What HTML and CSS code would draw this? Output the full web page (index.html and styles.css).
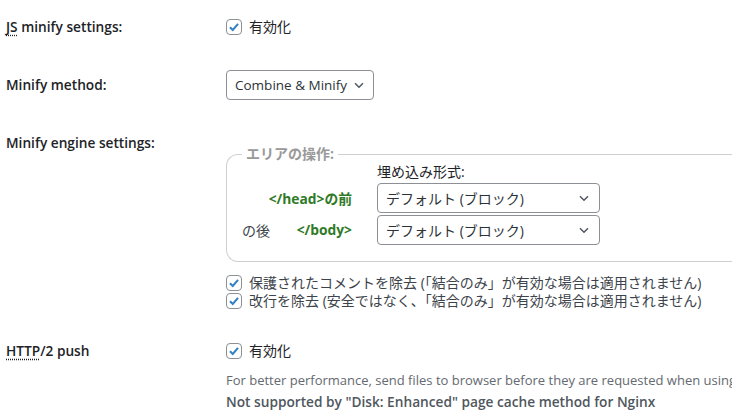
FILE: index.html
```html
<!DOCTYPE html>
<html lang="ja">
<head>
  <meta charset="UTF-8">
  <title>Minify</title>
  <link rel="stylesheet" href="styles.css">
</head>
<body>
  <div class="settings">
    <div class="row row-js">
      <div class="label"><abbr>JS</abbr> minify settings:</div>
      <div class="value">
        <label class="check">
          <span class="box"><svg viewBox="0 0 16 16" width="16" height="16"><path d="M3.4 8.2 L6.6 11.4 L12.6 4.4" fill="none" stroke="#3582c4" stroke-width="2.4"/></svg></span>
          有効化
        </label>
      </div>
    </div>

    <div class="row row-method">
      <div class="label">Minify method:</div>
      <div class="value">
        <div class="select select-method">
          <span>Combine &amp; Minify</span>
          <svg viewBox="0 0 12 12" width="12" height="12"><path d="M2 4.2 L6 8.2 L10 4.2" fill="none" stroke="#50575e" stroke-width="1.5"/></svg>
        </div>
      </div>
    </div>

    <div class="row row-engine">
      <div class="label">Minify engine settings:</div>
      <div class="value">
        <fieldset class="area">
          <legend>エリアの操作:</legend>
          <div class="area-grid">
            <div></div>
            <div class="area-head">埋め込み形式:</div>

            <div class="area-label right"><code>&lt;/head&gt;の前</code></div>
            <div class="select select-embed">
              <span>デフォルト (ブロック)</span>
              <svg viewBox="0 0 12 12" width="12" height="12"><path d="M2 4.2 L6 8.2 L10 4.2" fill="none" stroke="#50575e" stroke-width="1.5"/></svg>
            </div>

            <div class="area-label split"><span class="plain">の後</span><code>&lt;/body&gt;</code></div>
            <div class="select select-embed">
              <span>デフォルト (ブロック)</span>
              <svg viewBox="0 0 12 12" width="12" height="12"><path d="M2 4.2 L6 8.2 L10 4.2" fill="none" stroke="#50575e" stroke-width="1.5"/></svg>
            </div>
          </div>
        </fieldset>

        <div class="checks">
          <label class="check">
            <span class="box"><svg viewBox="0 0 16 16" width="16" height="16"><path d="M3.4 8.2 L6.6 11.4 L12.6 4.4" fill="none" stroke="#3582c4" stroke-width="2.4"/></svg></span>
            保護されたコメントを除去 (「結合のみ」が有効な場合は適用されません)
          </label>
          <label class="check">
            <span class="box"><svg viewBox="0 0 16 16" width="16" height="16"><path d="M3.4 8.2 L6.6 11.4 L12.6 4.4" fill="none" stroke="#3582c4" stroke-width="2.4"/></svg></span>
            改行を除去 (安全ではなく、「結合のみ」が有効な場合は適用されません)
          </label>
        </div>
      </div>
    </div>

    <div class="row row-push">
      <div class="label"><abbr>HTTP</abbr>/2 push</div>
      <div class="value">
        <label class="check">
          <span class="box"><svg viewBox="0 0 16 16" width="16" height="16"><path d="M3.4 8.2 L6.6 11.4 L12.6 4.4" fill="none" stroke="#3582c4" stroke-width="2.4"/></svg></span>
          有効化
        </label>
        <div class="desc-wrap">
          <p class="description">For better performance, send files to browser before they are requested when using the HTTP/2 protocol.</p>
          <p class="description strong">Not supported by "Disk: Enhanced" page cache method for Nginx</p>
        </div>
      </div>
    </div>
  </div>
</body>
</html>
```

FILE: styles.css
```css
body {
  margin: 0;
  background: #fff;
  color: #1d2327;
  font-family: "Open Sans", "Noto Sans CJK JP", sans-serif;
  font-size: 13px;
  overflow: hidden;
}
.settings {
  padding: 0 0 0 6px;
  width: 726px;
}
.row {
  display: grid;
  grid-template-columns: 220px 1fr;
  align-items: center;
}
.row-js {
  padding-top: 17px;
}
.row-method {
  margin-top: 33px;
}
.row-engine {
  margin-top: 33px;
  align-items: start;
}
.row-push {
  margin-top: 31px;
  align-items: start;
}
.value {
  min-width: 0;
}
.label {
  font-weight: 600;
  font-size: 13.7px;
  line-height: 20px;
}
abbr {
  text-decoration: underline dotted;
  text-underline-offset: 3px;
}
.check {
  display: flex;
  align-items: center;
  gap: 7px;
  line-height: 20px;
  font-size: 14px;
  white-space: nowrap;
}
.box {
  width: 14px;
  height: 14px;
  border: 1px solid #8c8f94;
  border-radius: 4px;
  display: flex;
  align-items: center;
  justify-content: center;
  flex: none;
}
.box svg {
  width: 14px;
  height: 14px;
}
.select {
  display: flex;
  align-items: center;
  justify-content: space-between;
  box-sizing: border-box;
  height: 30px;
  border: 1px solid #8c8f94;
  border-radius: 4px;
  padding: 0 8px 0 8px;
  font-size: 13.5px;
  color: #2c3338;
}
.select-method {
  width: 148px;
  gap: 5px;
}
.select-embed {
  width: 223px;
  font-size: 14px;
  padding-right: 9px;
}
.area {
  margin: 12px 0 0 0;
  padding: 0 15px 16px;
  border: 1px solid #cfcfcf;
  border-right: none;
  border-radius: 12px 0 0 12px;
  width: 700px;
}
.area legend {
  color: #999;
  font-weight: 700;
  font-size: 14px;
  padding: 0 4px;
  line-height: 18px;
}
.area-grid {
  display: grid;
  grid-template-columns: 110px 223px;
  column-gap: 25px;
  row-gap: 2px;
  align-items: center;
}
.area-head {
  line-height: 18px;
  font-size: 14px;
}
.area-label {
  font-size: 14px;
}
.area-label.right {
  text-align: right;
}
.area-label.split {
  display: flex;
  justify-content: space-between;
}
.area-label code {
  font-family: "Open Sans", "Noto Sans CJK JP", sans-serif;
  font-weight: 700;
  color: #2f7a26;
  font-size: 13.8px;
}
.plain {
  color: #3c434a;
}
.checks {
  margin-top: 12px;
}
.checks .check {
  line-height: 18px;
  color: #3c434a;
}
.desc-wrap {
  overflow: hidden;
  margin-top: 9px;
}
.description {
  margin: 0;
  color: #646970;
  font-size: 13px;
  line-height: 21px;
  white-space: nowrap;
}
.description.strong {
  font-weight: 600;
  font-size: 13.7px;
  color: #50575e;
}
```
